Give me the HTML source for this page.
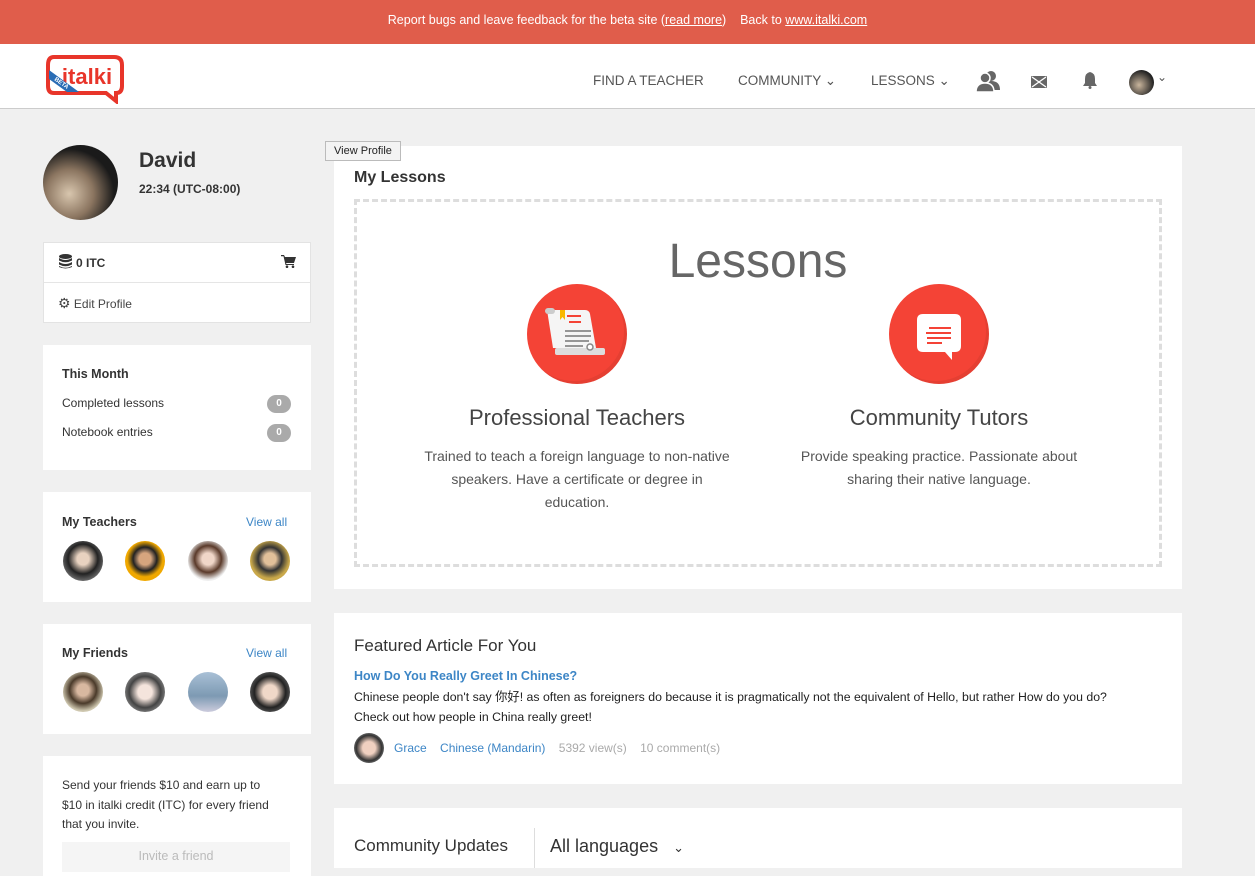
<!DOCTYPE html>
<html><head><meta charset="utf-8">
<style>
*{box-sizing:border-box;margin:0;padding:0}
body{width:1255px;height:863px;overflow:hidden;background:#f0f0f0;font-family:"Liberation Sans","Noto Sans CJK SC",sans-serif;color:#333;position:relative}
.top{position:absolute;left:0;top:0;width:1255px;height:44px;background:#e05d4b;color:#fff;font-size:12.5px;text-align:center;line-height:40px}
.top u{color:#fff}
.nav{position:absolute;top:44px;left:0;width:1255px;height:65px;background:#fff;border-bottom:1px solid #ccc}
.nav .it{position:absolute;top:29px;font-size:13.5px;color:#555}
.box{position:absolute;background:#fff}
.abs{position:absolute}
.av{position:absolute;border-radius:50%;width:40px;height:40px}
.badge{position:absolute;width:24px;height:18px;border-radius:9px;background:#aaa;color:#fff;font-size:10px;text-align:center;line-height:18px;font-weight:bold}
.link{color:#3d86c6}
.circ{position:absolute;width:100px;height:100px;border-radius:50%;background:#f44336;box-shadow:inset -3px -3px 0 rgba(0,0,0,.06)}
</style></head><body>
<div class="top">Report bugs and leave feedback for the beta site (<u>read more</u>) &nbsp;&nbsp; Back to <u>www.italki.com</u></div>
<div class="nav">
 <svg class="abs" style="left:45px;top:10px" width="80" height="50" viewBox="0 0 80 50">
  <path d="M9 3 H69 Q77 3 77 11 V32 Q77 39 71 39 V47 L61 39 H9 Q3 39 3 32 V11 Q3 3 9 3Z" fill="#fff" stroke="#e8352a" stroke-width="4"/>
  <text x="42" y="30" font-family="Liberation Sans" font-weight="bold" font-size="22" fill="#e8352a" text-anchor="middle">italki</text>
  <path d="M4 16 L34 38 H22 L4 25Z" fill="#2a6db5"/>
  <text x="9" y="26" font-size="6" fill="#fff" font-weight="bold" transform="rotate(35 9 26)">BETA</text>
 </svg>
 <div class="it" style="left:593px">FIND A TEACHER</div>
 <div class="it" style="left:738px">COMMUNITY ⌄</div>
 <div class="it" style="left:871px">LESSONS ⌄</div>
 <svg class="abs" style="left:976px;top:26px" width="24" height="22" viewBox="0 0 24 22" fill="#666"><circle cx="15" cy="6" r="5"/><path d="M6 20 Q6 11 15 11 Q24 11 24 20Z"/><circle cx="9" cy="8" r="5" stroke="#fff" stroke-width="1.5"/><path d="M0 22 Q0 13 9 13 Q18 13 18 22Z" stroke="#fff" stroke-width="1.5"/></svg>
 <svg class="abs" style="left:1031px;top:32px" width="16" height="12" viewBox="0 0 16 12"><rect width="16" height="12" rx="1" fill="#666"/><path d="M1 1 L15 11 M15 1 L1 11" stroke="#fff" stroke-width="1.3"/></svg>
 <svg class="abs" style="left:1082px;top:28px" width="16" height="17" viewBox="0 0 16 17" fill="#666"><path d="M8 0 Q3 1 3 7 V11 L1 14 H15 L13 11 V7 Q13 1 8 0Z"/><circle cx="8" cy="15.5" r="1.5"/></svg>
 <div class="av" style="left:1129px;top:26px;width:25px;height:25px;background:radial-gradient(circle at 40% 60%,#c9b59c,#222 70%)"></div>
 <div class="it" style="left:1157px;top:26px;font-size:12px">⌄</div>
</div>

<div class="av" style="left:43px;top:145px;width:75px;height:75px;background:radial-gradient(circle at 35% 65%,#d8c6ae 0,#8b7560 35%,#1a1a1a 65%)"></div>
<div class="abs" style="left:139px;top:149px;font-size:21px;font-weight:bold">David</div>
<div class="abs" style="left:139px;top:182px;font-size:12px;font-weight:bold">22:34 (UTC-08:00)</div>

<div class="box" style="left:43px;top:242px;width:268px;height:81px;border:1px solid #e3e3e3">
 <svg class="abs" style="left:15px;top:11px" width="13" height="15" viewBox="0 0 13 15" fill="#333"><ellipse cx="6.5" cy="2.5" rx="6.5" ry="2.5"/><path d="M0 4 Q6.5 8 13 4 V6.5 Q6.5 10 0 6.5Z M0 8 Q6.5 12 13 8 V10.5 Q6.5 14 0 10.5Z M0 12 Q6.5 15.5 13 12 V13 Q6.5 16 0 13Z"/></svg>
 <div class="abs" style="left:32px;top:13px;font-size:12px;font-weight:bold">0 ITC</div>
 <svg class="abs" style="left:237px;top:12px" width="15" height="13" viewBox="0 0 15 13" fill="#333"><path d="M0 0 H3 L4 2 H15 L13 8 H5 L5.5 9 H13 V10 H4.5 L2.5 1.2 H0Z"/><circle cx="6" cy="11.7" r="1.3"/><circle cx="12" cy="11.7" r="1.3"/></svg>
 <div class="abs" style="left:0;top:39px;width:266px;border-top:1px solid #e5e5e5"></div>
 <div class="abs" style="left:14px;top:52px;font-size:12px;color:#444"><span style="font-size:14px">⚙</span> Edit Profile</div>
</div>

<div class="box" style="left:43px;top:345px;width:268px;height:125px">
 <div class="abs" style="left:19px;top:22px;font-size:12.5px;font-weight:bold">This Month</div>
 <div class="abs" style="left:19px;top:51px;font-size:12px">Completed lessons</div>
 <div class="badge" style="left:224px;top:50px">0</div>
 <div class="abs" style="left:19px;top:80px;font-size:12px">Notebook entries</div>
 <div class="badge" style="left:224px;top:79px">0</div>
</div>

<div class="box" style="left:43px;top:492px;width:268px;height:110px">
 <div class="abs" style="left:19px;top:23px;font-size:12.5px;font-weight:bold">My Teachers</div>
 <div class="abs link" style="left:203px;top:23px;font-size:12px">View all</div>
 <div class="av" style="left:20px;top:49px;background:radial-gradient(circle at 50% 45%,#e8d2c0 20%,#222 50%,#bbb)"></div>
 <div class="av" style="left:82px;top:49px;background:radial-gradient(circle at 50% 45%,#d6a57e 20%,#222 40%,#f0a800 60%)"></div>
 <div class="av" style="left:145px;top:49px;background:radial-gradient(circle at 50% 45%,#f0d6c8 20%,#5a3a2a 45%,#eee 70%)"></div>
 <div class="av" style="left:207px;top:49px;background:radial-gradient(circle at 50% 45%,#e2c09a 20%,#333 40%,#c9a84a 65%)"></div>
</div>

<div class="box" style="left:43px;top:624px;width:268px;height:110px">
 <div class="abs" style="left:19px;top:22px;font-size:12.5px;font-weight:bold">My Friends</div>
 <div class="abs link" style="left:203px;top:22px;font-size:12px">View all</div>
 <div class="av" style="left:20px;top:48px;background:radial-gradient(circle at 50% 45%,#d8b8a0 20%,#4a3a2a 45%,#cfc8b0 70%)"></div>
 <div class="av" style="left:82px;top:48px;background:radial-gradient(circle at 50% 50%,#f4e4dc 25%,#444 55%,#ccc)"></div>
 <div class="av" style="left:145px;top:48px;background:linear-gradient(#a9c0d6,#7d9ab3 60%,#ccd)"></div>
 <div class="av" style="left:207px;top:48px;background:radial-gradient(circle at 50% 50%,#f0d8c8 25%,#222 55%,#999)"></div>
</div>

<div class="box" style="left:43px;top:756px;width:268px;height:120px">
 <div class="abs" style="left:19px;top:20px;font-size:12px;line-height:19.5px;width:215px">Send your friends $10 and earn up to $10 in italki credit (ITC) for every friend that you invite.</div>
 <div class="abs" style="left:19px;top:86px;width:228px;height:30px;background:#f5f5f5;color:#bbb;font-size:12.5px;text-align:center;line-height:28px">Invite a friend</div>
</div>

<div class="box" style="left:334px;top:146px;width:848px;height:443px">
 <div class="abs" style="left:20px;top:23px;font-size:16px;font-weight:bold;color:#333">My Lessons</div>
 <div class="abs" style="left:20px;top:53px;width:808px;height:368px;border:3px dashed #ddd"></div>
 <div class="abs" style="left:0;top:88px;width:848px;text-align:center;font-size:48px;color:#666;font-weight:300">Lessons</div>
 <div class="circ" style="left:193px;top:138px">
  <svg width="100" height="100" viewBox="0 0 100 100"><path d="M20 26 H58 Q62 26 63 30 L69 64 H26 Z" fill="#f5f5f5"/><rect x="18" y="24" width="10" height="6" rx="3" fill="#ccc"/><path d="M33 26 H38 V36 L35.5 33 L33 36Z" fill="#f9b800"/><path d="M40 32 H54 M42 38 H54" stroke="#f44336" stroke-width="2"/><path d="M38 47 H64 M38 52 H64 M38 57 H62 M38 62 H56" stroke="#888" stroke-width="1.8"/><rect x="28" y="64" width="50" height="7" rx="2" fill="#ddd"/><circle cx="63" cy="63" r="3" fill="#fff" stroke="#888" stroke-width="1.5"/></svg>
 </div>
 <div class="circ" style="left:555px;top:138px">
  <svg width="100" height="100" viewBox="0 0 100 100"><path d="M34 30 H66 Q72 30 72 36 V62 Q72 68 66 68 H63 V76 L56 68 H34 Q28 68 28 62 V36 Q28 30 34 30Z" fill="#fff"/><path d="M40 44 H62 M37 49 H62 M38 54 H62 M38 59 H53" stroke="#f44336" stroke-width="2"/></svg>
 </div>
 <div class="abs" style="left:63px;top:259px;width:360px;text-align:center;font-size:22px;color:#444">Professional Teachers</div>
 <div class="abs" style="left:63px;top:299px;width:360px;text-align:center;font-size:14px;line-height:23px;color:#555;padding:0 24px">Trained to teach a foreign language to non-native speakers. Have a certificate or degree in education.</div>
 <div class="abs" style="left:425px;top:259px;width:360px;text-align:center;font-size:22px;color:#444">Community Tutors</div>
 <div class="abs" style="left:425px;top:299px;width:360px;text-align:center;font-size:14px;line-height:23px;color:#555;padding:0 20px">Provide speaking practice. Passionate about sharing their native language.</div>
</div>
<div class="abs" style="left:325px;top:141px;width:76px;height:20px;background:#f3f3f3;border:1px solid #bbb;font-size:11px;line-height:18px;text-align:center;color:#222;z-index:5">View Profile</div>

<div class="box" style="left:334px;top:613px;width:848px;height:171px">
 <div class="abs" style="left:20px;top:23px;font-size:17px;color:#333">Featured Article For You</div>
 <div class="abs link" style="left:20px;top:56px;font-size:12.5px;font-weight:bold">How Do You Really Greet In Chinese?</div>
 <div class="abs" style="left:20px;top:75px;font-size:12.3px;line-height:19.5px;width:790px;color:#222">Chinese people don't say 你好! as often as foreigners do because it is pragmatically not the equivalent of Hello, but rather How do you do? Check out how people in China really greet!</div>
 <div class="av" style="left:20px;top:120px;width:30px;height:30px;background:radial-gradient(circle at 50% 50%,#f0d0c0 30%,#333 60%,#ddd)"></div>
 <div class="abs" style="left:60px;top:128px;font-size:12px"><span class="link">Grace</span>&nbsp;&nbsp;&nbsp; <span class="link">Chinese (Mandarin)</span>&nbsp;&nbsp;&nbsp; <span style="color:#aaa">5392 view(s)&nbsp;&nbsp;&nbsp; 10 comment(s)</span></div>
</div>

<div class="box" style="left:334px;top:808px;width:848px;height:60px">
 <div class="abs" style="left:20px;top:28px;font-size:17px;color:#333">Community Updates</div>
 <div class="abs" style="left:200px;top:20px;height:40px;border-left:1px solid #ddd"></div>
 <div class="abs" style="left:216px;top:28px;font-size:18px;color:#333">All languages &nbsp;&nbsp;<span style="font-size:13px">⌄</span></div>
</div>
</body></html>
